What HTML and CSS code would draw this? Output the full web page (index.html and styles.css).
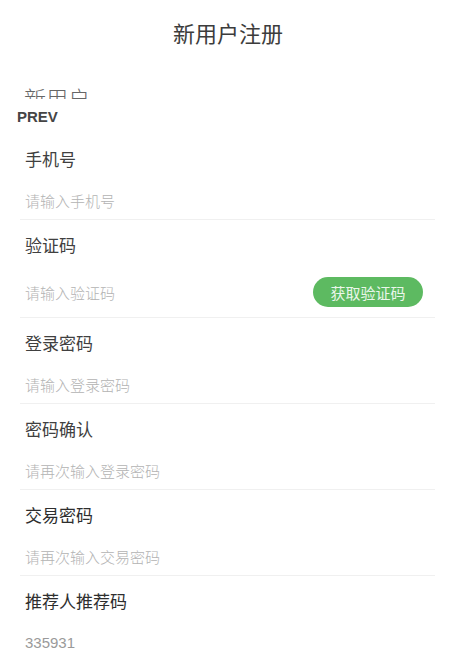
FILE: index.html
```html
<!DOCTYPE html>
<html lang="zh-CN">
<head>
<meta charset="utf-8">
<title>新用户注册</title>
<link rel="stylesheet" href="styles.css">
</head>
<body>
<div class="page">
  <header class="header">
    <h1 class="title">新用户注册</h1>
  </header>
  <div class="sub"><span>新用户</span></div>
  <div class="prev">PREV</div>
  <form class="form">
    <div class="field first">
      <div class="label">手机号</div>
      <div class="row"><span class="ph">请输入手机号</span></div>
    </div>
    <div class="field">
      <div class="label">验证码</div>
      <div class="row row-code">
        <span class="ph">请输入验证码</span>
        <span class="btn">获取验证码</span>
      </div>
    </div>
    <div class="field">
      <div class="label">登录密码</div>
      <div class="row"><span class="ph">请输入登录密码</span></div>
    </div>
    <div class="field">
      <div class="label">密码确认</div>
      <div class="row"><span class="ph">请再次输入登录密码</span></div>
    </div>
    <div class="field">
      <div class="label dark">交易密码</div>
      <div class="row"><span class="ph">请再次输入交易密码</span></div>
    </div>
    <div class="field last">
      <div class="label dark">推荐人推荐码</div>
      <div class="row"><span class="val">335931</span></div>
    </div>
  </form>
</div>
</body>
</html>
```
FILE: styles.css
```css
html, body {
  margin: 0;
  padding: 0;
  background: #ffffff;
}
body {
  font-family: "Noto Sans CJK SC", "Noto Sans", sans-serif;
  color: #3a3a3a;
}
.page {
  width: 449px;
  height: 653px;
  overflow: hidden;
}
.header {
  padding-top: 17px;
  display: flex;
  justify-content: center;
  padding-left: 7px;
}
.title {
  margin: 0;
  font-size: 22px;
  line-height: 30px;
  font-weight: 400;
  color: #3c3c3c;
}
.sub {
  margin-top: 35px;
  height: 17px;
  overflow: hidden;
  padding-left: 24px;
  font-size: 22px;
  line-height: 30px;
  color: #666;
  font-weight: 300;
}
.prev {
  margin-top: 9px;
  padding-left: 17px;
  font-family: "Liberation Sans", Arial, sans-serif;
  font-weight: 700;
  font-size: 15px;
  line-height: 18px;
  color: #454545;
}
.form {
  margin: 8px 14px 0 20px;
}
.field {
  padding-top: 13px;
  border-bottom: 1px solid #f0f0f0;
}
.field.last {
  border-bottom: none;
}
.label {
  padding-left: 5px;
  font-size: 17px;
  line-height: 24px;
  color: #404040;
}
.label.dark {
  color: #2e2e2e;
}
.row {
  margin-top: 10px;
  height: 38px;
  padding-left: 5px;
  padding-right: 12px;
  display: flex;
  align-items: center;
  justify-content: space-between;
}
.row-code {
  height: 50px;
}
.ph {
  font-size: 15px;
  color: #b3b3b3;
  font-weight: 300;
}
.val {
  font-family: "Liberation Sans", Arial, sans-serif;
  font-size: 15px;
  color: #9a9a9a;
}
.btn {
  width: 110px;
  height: 30px;
  border-radius: 15px;
  background: #5dba61;
  color: #eaf6ea;
  font-size: 15px;
  display: flex;
  align-items: center;
  justify-content: center;
}
```
